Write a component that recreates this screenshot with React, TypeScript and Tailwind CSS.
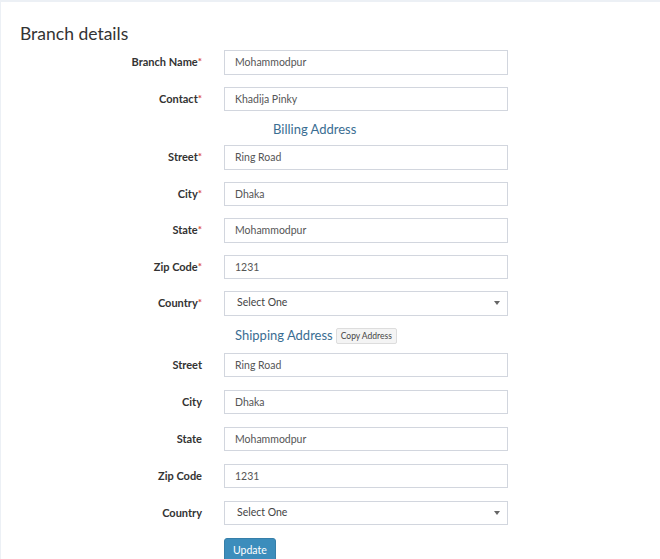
type Field = { label: string; value?: string; required?: boolean; select?: boolean };

const billing: Field[] = [
  { label: 'Street', value: 'Ring Road', required: true },
  { label: 'City', value: 'Dhaka', required: true },
  { label: 'State', value: 'Mohammodpur', required: true },
  { label: 'Zip Code', value: '1231', required: true },
  { label: 'Country', required: true, select: true },
];

const shipping: Field[] = [
  { label: 'Street', value: 'Ring Road' },
  { label: 'City', value: 'Dhaka' },
  { label: 'State', value: 'Mohammodpur' },
  { label: 'Zip Code', value: '1231' },
  { label: 'Country', select: true },
];

const Row = ({ field }: { field: Field }) => (
  <div className="flex items-center h-[24.5px]">
    <label className="w-[201px] text-right text-[11px] font-bold text-[#333]">
      {field.label}
      {field.required && <span className="text-[#dd4b39] text-[10px] align-top">*</span>}
    </label>
    {field.select ? (
      <div className="ml-[22px] w-[284px] h-full border border-[#d2d6de] flex items-center justify-between pl-[12px] pr-[7px] text-[10.5px] text-[#444]">
        <span>Select One</span>
        <span className="w-0 h-0 border-l-[3px] border-r-[3px] border-t-[4px] border-l-transparent border-r-transparent border-t-[#666]" />
      </div>
    ) : (
      <input
        readOnly
        value={field.value}
        className="ml-[22px] w-[284px] h-full border border-[#d2d6de] px-[10px] text-[10.5px] text-[#555] outline-none"
      />
    )}
  </div>
);

export default function App() {
  return (
    <div className="bg-[#ecf0f5] pt-[2px] pl-[1px] h-screen overflow-hidden" style={{ fontFamily: 'Lato, sans-serif' }}>
      <div className="bg-white min-h-[600px]">
        <h2 className="pl-[19px] pt-[20px] text-[17.5px] leading-[24px] text-[#333] font-normal">Branch details</h2>
        <div className="mt-[4px] flex flex-col gap-[12px]">
          <Row field={{ label: 'Branch Name', value: 'Mohammodpur', required: true }} />
          <Row field={{ label: 'Contact', value: 'Khadija Pinky', required: true }} />
        </div>
        <div className="pl-[272px] pt-[3px] h-[34px] flex items-center text-[13px] text-[#3a6d92]">Billing Address</div>
        <div className="flex flex-col gap-[12px]">
          {billing.map((f) => (
            <Row key={'b' + f.label} field={f} />
          ))}
        </div>
        <div className="pl-[234px] pt-[4px] h-[37px] flex items-center gap-[3px]">
          <span className="text-[13px] text-[#3a6d92]">Shipping Address</span>
          <button className="h-[16px] px-[4px] bg-[#f4f4f4] border border-[#ddd] rounded-[2px] text-[8.5px] text-[#444] leading-none">
            Copy Address
          </button>
        </div>
        <div className="flex flex-col gap-[12.5px]">
          {shipping.map((f) => (
            <Row key={'s' + f.label} field={f} />
          ))}
        </div>
        <div className="pl-[223px] mt-[11px]">
          <button className="h-[26px] px-[8px] bg-[#3c8dbc] border border-[#367fa9] rounded-[3px] text-white text-[10.5px]">
            Update
          </button>
        </div>
      </div>
    </div>
  );
}
